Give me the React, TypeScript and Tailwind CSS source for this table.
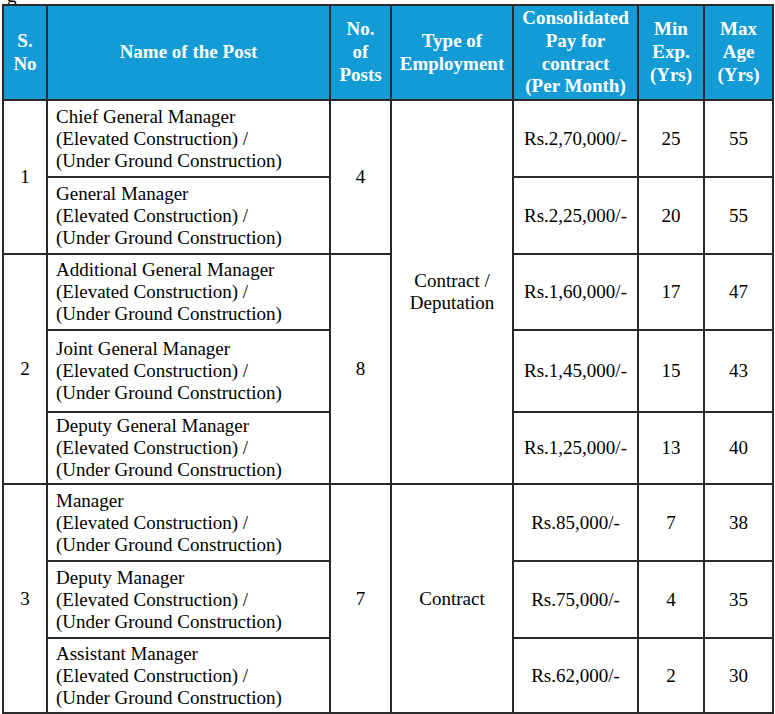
import React from "react";

const font = { fontFamily: '"Liberation Serif", "Times New Roman", serif' };

const Post = ({ title }: { title: string }) => (
  <div className="text-left">
    <div>{title}</div>
    <div>(Elevated Construction) /</div>
    <div>(Under Ground Construction)</div>
  </div>
);

const B = "border-2 border-[#2a2a2a]";
const G = "border-t-2 border-t-[#6a6a6a]";

export default function App() {
  return (
    <div className="bg-white w-[775px] h-[714px] overflow-hidden" style={font}>
      <div className="h-[4px] overflow-hidden pl-[7px]">
        <div className="mt-[-15px] text-[19px] leading-[22px] text-black">g</div>
      </div>
      <table className="ml-[2px] w-[770px] table-fixed border-collapse text-[19px] leading-[22px] text-black border-2 border-[#4a4a4a]">
        <colgroup>
          <col className="w-[44px]" />
          <col className="w-[283px]" />
          <col className="w-[61px]" />
          <col className="w-[122px]" />
          <col className="w-[125px]" />
          <col className="w-[66px]" />
          <col className="w-[69px]" />
        </colgroup>
        <thead>
          <tr className="h-[95px] bg-[#139bd5] text-white font-bold leading-[22.7px]">
            <th className={`${B} px-0`}>S.<br />No</th>
            <th className={B}>Name of the Post</th>
            <th className={B}>No.<br />of<br />Posts</th>
            <th className={B}>Type of<br />Employment</th>
            <th className={B}>Consolidated<br />Pay for<br />contract<br />(Per Month)</th>
            <th className={B}>Min<br />Exp.<br />(Yrs)</th>
            <th className={B}>Max<br />Age<br />(Yrs)</th>
          </tr>
        </thead>
        <tbody className="text-center">
          <tr className="h-[77px]">
            <td rowSpan={2} className={B}>1</td>
            <td className={`${B} pl-[8px]`}><Post title="Chief General Manager" /></td>
            <td rowSpan={2} className={B}>4</td>
            <td rowSpan={5} className={B}>Contract /<br />Deputation</td>
            <td className={B}>Rs.2,70,000/-</td>
            <td className={B}>25</td>
            <td className={B}>55</td>
          </tr>
          <tr className="h-[77px]">
            <td className={`${B} pl-[8px]`}><Post title="General Manager" /></td>
            <td className={B}>Rs.2,25,000/-</td>
            <td className={B}>20</td>
            <td className={B}>55</td>
          </tr>
          <tr className="h-[76px]">
            <td rowSpan={3} className={`${B} ${G}`}>2</td>
            <td className={`${B} ${G} pl-[8px]`}><Post title="Additional General Manager" /></td>
            <td rowSpan={3} className={`${B} ${G}`}>8</td>
            <td className={`${B} ${G}`}>Rs.1,60,000/-</td>
            <td className={`${B} ${G}`}>17</td>
            <td className={`${B} ${G}`}>47</td>
          </tr>
          <tr className="h-[82px]">
            <td className={`${B} pl-[8px]`}><Post title="Joint General Manager" /></td>
            <td className={B}>Rs.1,45,000/-</td>
            <td className={B}>15</td>
            <td className={B}>43</td>
          </tr>
          <tr className="h-[72px]">
            <td className={`${B} pl-[8px]`}><Post title="Deputy General Manager" /></td>
            <td className={B}>Rs.1,25,000/-</td>
            <td className={B}>13</td>
            <td className={B}>40</td>
          </tr>
          <tr className="h-[77px]">
            <td rowSpan={3} className={`${B} ${G}`}>3</td>
            <td className={`${B} ${G} pl-[8px]`}><Post title="Manager" /></td>
            <td rowSpan={3} className={`${B} ${G}`}>7</td>
            <td rowSpan={3} className={`${B} ${G}`}>Contract</td>
            <td className={`${B} ${G}`}>Rs.85,000/-</td>
            <td className={`${B} ${G}`}>7</td>
            <td className={`${B} ${G}`}>38</td>
          </tr>
          <tr className="h-[77px]">
            <td className={`${B} pl-[8px]`}><Post title="Deputy Manager" /></td>
            <td className={B}>Rs.75,000/-</td>
            <td className={B}>4</td>
            <td className={B}>35</td>
          </tr>
          <tr className="h-[75px]">
            <td className={`${B} pl-[8px]`}><Post title="Assistant Manager" /></td>
            <td className={B}>Rs.62,000/-</td>
            <td className={B}>2</td>
            <td className={B}>30</td>
          </tr>
        </tbody>
      </table>
    </div>
  );
}
